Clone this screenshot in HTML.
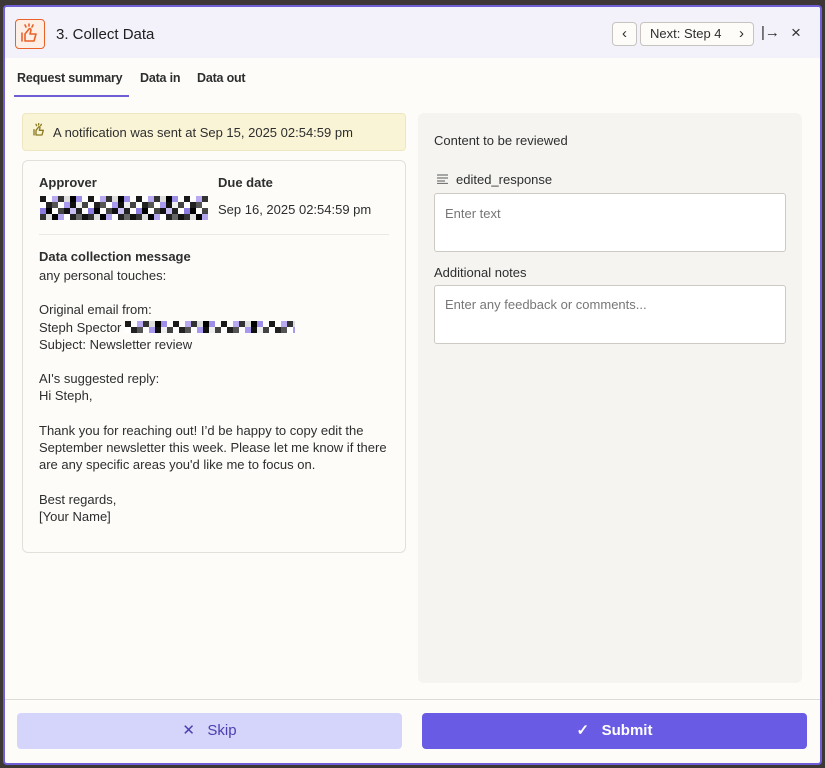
<!DOCTYPE html><html><head><style>
*{box-sizing:border-box;margin:0;padding:0}
body{width:825px;height:768px;background:#3d3735;font-family:"Liberation Sans",sans-serif;color:#2d2e2e;position:relative;overflow:hidden}
.panel{position:absolute;left:3px;top:5px;width:819px;height:760px;border:2px solid #6e5fd6;border-radius:4px;background:#fdfcf9;overflow:hidden}
.hdr{position:absolute;left:0;top:0;right:0;height:51px;background:#f3f2fa}
.abs{position:absolute}
.px{background:
linear-gradient(90deg,#1a1a1a 0 6px,#fff 6px 12px,#b9a9f0 12px 18px,#333 18px 24px,#ddd 24px 30px,#000 30px 36px,#9f8ee8 36px 42px,#fff 42px 48px) 0 0/48px 6px,
linear-gradient(90deg,#fff 0 6px,#222 6px 12px,#555 12px 18px,#fff 18px 24px,#a898ee 24px 30px,#111 30px 36px,#eee 36px 42px,#444 42px 48px) 0 6px/48px 6px,
linear-gradient(90deg,#8c7ce0 0 6px,#000 6px 12px,#fff 12px 18px,#444 18px 24px,#111 24px 30px,#c8bdf5 30px 36px,#222 36px 42px,#fff 42px 48px) 0 12px/48px 6px,
linear-gradient(90deg,#333 0 6px,#ddd 6px 12px,#000 12px 18px,#b3a4f0 18px 24px,#fff 24px 30px,#222 30px 36px,#666 36px 42px,#111 42px 48px) 0 18px/48px 6px;background-repeat:repeat-x}
.t{font-size:13px;line-height:17px}
</style></head><body>
<div class="panel">
<div class="hdr"></div>
<div class="abs" style="left:10px;top:12px;width:30px;height:30px;border:1.5px solid #e8622a;border-radius:4px;background:#fdeee6">
<svg width="27" height="27" viewBox="0 0 27 27"><g fill="none" stroke="#e8622a" stroke-width="1.6" stroke-linecap="round" stroke-linejoin="round"><path d="M6 13v8M9 21h9l2-7h-6l1-4c0-1-1-2-2-1l-4 5v7"/><path d="M13 4v2M17 5l-1 2M9 5l1 2"/></g></svg></div>
<div class="abs" style="left:51px;top:19px;font-size:15px;color:#202020">3. Collect Data</div>
<div class="abs" style="left:607px;top:15px;width:25px;height:24px;border:1px solid #c7c4c0;border-radius:4px;background:#fdfcf9;text-align:center;font-size:15px;line-height:21px">‹</div>
<div class="abs" style="left:635px;top:15px;width:114px;height:24px;border:1px solid #c7c4c0;border-radius:4px;background:#fdfcf9;font-size:13px;line-height:22px;padding-left:9px">Next: Step 4<span style="position:absolute;right:9px;font-size:15px;line-height:21px">›</span></div>
<div class="abs" style="left:756px;top:17px;font-size:15px">|→</div>
<div class="abs" style="left:786px;top:16px;font-size:17px">×</div>
<div class="abs" style="left:12px;top:64px;font-size:12.5px;font-weight:bold;letter-spacing:-0.2px">Request summary</div>
<div class="abs" style="left:135px;top:64px;font-size:12.5px;font-weight:bold;letter-spacing:-0.2px">Data in</div>
<div class="abs" style="left:192px;top:64px;font-size:12.5px;font-weight:bold;letter-spacing:-0.2px">Data out</div>
<div class="abs" style="left:9px;top:88px;width:115px;height:2px;background:#6e5fd6"></div>
<div class="abs" style="left:17px;top:106px;width:384px;height:38px;background:#faf4d6;border:1px solid #efe6bf;border-radius:4px"></div>
<svg class="abs" style="left:25px;top:114px" width="18" height="18" viewBox="0 0 27 27"><g fill="none" stroke="#8a7a20" stroke-width="2" stroke-linecap="round" stroke-linejoin="round"><path d="M6 13v8M9 21h9l2-7h-6l1-4c0-1-1-2-2-1l-4 5v7"/><path d="M13 4v2M17 5l-1 2M9 5l1 2"/></g></svg>
<div class="abs t" style="left:48px;top:117px">A notification was sent at Sep 15, 2025 02:54:59 pm</div>
<div class="abs" style="left:17px;top:153px;width:384px;height:393px;border:1px solid #e3e0da;border-radius:6px"></div>
<div class="abs t" style="left:34px;top:167px;font-weight:bold">Approver</div>
<div class="abs t" style="left:213px;top:167px;font-weight:bold">Due date</div>
<div class="abs px" style="left:35px;top:189px;width:168px;height:24px"></div>
<div class="abs t" style="left:213px;top:194px">Sep 16, 2025 02:54:59 pm</div>
<div class="abs" style="left:34px;top:227px;width:350px;height:1px;background:#ece9e4"></div>
<div class="abs t" style="left:34px;top:241px;font-weight:bold">Data collection message</div>
<div class="abs t" style="left:34px;top:260px;line-height:17.2px">any personal touches:<br><br>Original email from:<br>Steph Spector <span class="px" style="display:inline-block;width:170px;height:12px;vertical-align:-1px"></span><br>Subject: Newsletter review<br><br>AI's suggested reply:<br>Hi Steph,<br><br>Thank you for reaching out! I’d be happy to copy edit the<br>September newsletter this week. Please let me know if there<br>are any specific areas you'd like me to focus on.<br><br>Best regards,<br>[Your Name]</div>
<div class="abs" style="left:413px;top:106px;width:384px;height:570px;background:#f5f4f1;border-radius:6px"></div>
<div class="abs t" style="left:429px;top:125px">Content to be reviewed</div>
<svg class="abs" style="left:432px;top:167px" width="12" height="10"><path d="M0 1h11M0 4h11M0 7h8M0 9.5h11" stroke="#777" stroke-width="1.3"/></svg>
<div class="abs t" style="left:451px;top:164px">edited_response</div>
<div class="abs" style="left:429px;top:186px;width:352px;height:59px;background:#fff;border:1px solid #cdcac4;border-radius:3px"></div>
<div class="abs t" style="left:440px;top:198px;color:#777">Enter text</div>
<div class="abs t" style="left:429px;top:257px">Additional notes</div>
<div class="abs" style="left:429px;top:278px;width:352px;height:59px;background:#fff;border:1px solid #cdcac4;border-radius:3px"></div>
<div class="abs t" style="left:440px;top:289px;color:#777">Enter any feedback or comments...</div>
<div class="abs" style="left:0;top:692px;right:0;height:1px;background:#dedbd6"></div>
<div class="abs" style="left:12px;top:706px;width:385px;height:36px;background:#d5d4fb;border-radius:4px;text-align:center;line-height:36px;color:#4a3fb0;font-size:15px">✕&nbsp;&nbsp; Skip</div>
<div class="abs" style="left:417px;top:706px;width:385px;height:36px;background:#695be4;border-radius:4px;text-align:center;line-height:36px;color:#fff;font-size:15px;font-weight:bold">✓&nbsp;&nbsp; Submit</div>
</div>
</body></html>
